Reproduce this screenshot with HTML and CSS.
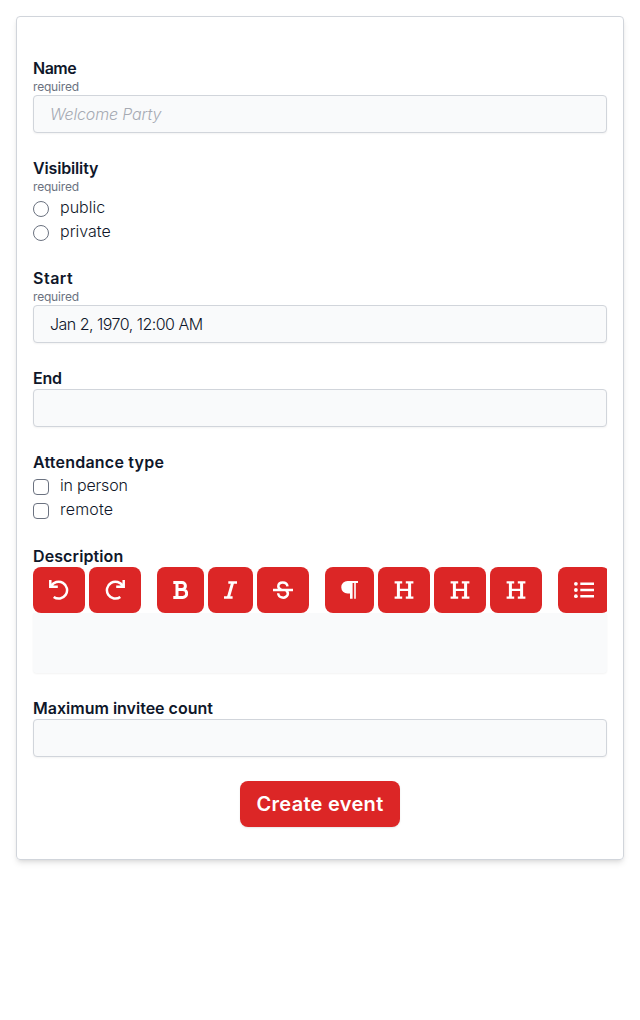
FILE: index.html
```html
<!DOCTYPE html>
<html lang="en">
<head>
<meta charset="utf-8">
<title>Create event</title>
<link rel="stylesheet" href="styles.css">
</head>
<body>
<form class="card">
  <div class="field">
    <label class="label" for="name"><span class="t-name">Name</span></label>
    <span class="required">required</span>
    <input class="input" id="name" placeholder="Welcome Party">
  </div>
  <div class="field">
    <div class="label"><span class="t-visibility">Visibility</span></div>
    <span class="required">required</span>
    <label class="choice"><input class="mark radio" type="radio" name="visibility"><span class="t-public">public</span></label>
    <label class="choice"><input class="mark radio" type="radio" name="visibility"><span class="t-private">private</span></label>
  </div>
  <div class="field">
    <label class="label" for="start"><span class="t-start">Start</span></label>
    <span class="required">required</span>
    <input class="input t-date" id="start" value="Jan 2, 1970, 12:00 AM">
  </div>
  <div class="field">
    <label class="label" for="end"><span class="t-end">End</span></label>
    <input class="input" id="end">
  </div>
  <div class="field">
    <div class="label"><span class="t-attendance">Attendance type</span></div>
    <label class="choice"><input class="mark" type="checkbox"><span class="t-person">in person</span></label>
    <label class="choice"><input class="mark" type="checkbox"><span class="t-remote">remote</span></label>
  </div>
  <div class="field">
    <div class="label"><span class="t-description">Description</span></div>
    <div class="toolbar">
      <div class="group">
        <button type="button" class="tool" aria-label="Undo"><svg width="20" height="20" viewBox="0 0 20 20"><path class="line" d="M1.300 0v6.700h7.500M2.200 6.300A8.400 8.400 0 1 1 4.700 16.900"/></svg></button>
        <button type="button" class="tool" aria-label="Redo"><svg width="20" height="20" viewBox="0 0 20 20"><path class="line" d="M18.700 0v6.700h-7.500M17.800 6.300A8.400 8.400 0 1 0 15.300 16.900"/></svg></button>
      </div>
      <div class="group">
        <button type="button" class="tool" aria-label="Bold"><svg width="15" height="20" viewBox="0 0 15 20"><path class="heavy" d="M.3 2.600H9a3.400 3.400 0 0 1 0 6.800H4.200M9 9.600h.8a3.900 3.900 0 0 1 0 7.800H.3M4 2.600v14.800"/></svg></button>
        <button type="button" class="tool" aria-label="Italic"><svg width="13" height="20" viewBox="0 0 13 20"><path class="line" d="M4.300 2.400H13M0 17.600h8.600"/><path class="heavy" d="M8.700 2.400 4.300 17.600"/></svg></button>
        <button type="button" class="tool" aria-label="Strikethrough"><svg width="20" height="20" viewBox="0 0 20 20"><path class="line" d="M0 10h20M14.500 6.300C13.800 1.200 5.500 1.300 5.300 6.200 5.300 8 6.500 9 8.500 9.800M13.200 10.500C15 12 15.300 13.500 14.500 15.200 12.500 19 5.500 18.300 5.200 13.200"/></svg></button>
      </div>
      <div class="group">
        <button type="button" class="tool" aria-label="Paragraph"><svg width="17" height="20" viewBox="0 0 17 20"><path class="solid" d="M6.500 1H17v1.900h-2.200v15.900h-1.600V2.900h-1.600v15.900H9V13.500H6.500A6.250 6.250 0 0 1 6.500 1z"/></svg></button>
        <button type="button" class="tool" aria-label="Heading 1"><svg width="20" height="20" viewBox="0 0 20 20"><path class="serif" d="M.6 2.400h7.600M11.800 2.400h7.600M.6 17.700h7.600M11.800 17.700h7.600M4.400 9.900h11.200"/><path class="heavy" d="M4.400 2.400v15.300M15.600 2.400v15.300"/></svg></button>
        <button type="button" class="tool" aria-label="Heading 2"><svg width="20" height="20" viewBox="0 0 20 20"><path class="serif" d="M.6 2.400h7.600M11.800 2.400h7.600M.6 17.700h7.600M11.800 17.700h7.600M4.400 9.900h11.200"/><path class="heavy" d="M4.400 2.400v15.300M15.600 2.400v15.300"/></svg></button>
        <button type="button" class="tool" aria-label="Heading 3"><svg width="20" height="20" viewBox="0 0 20 20"><path class="serif" d="M.6 2.400h7.600M11.800 2.400h7.600M.6 17.700h7.600M11.800 17.700h7.600M4.400 9.900h11.200"/><path class="heavy" d="M4.400 2.400v15.300M15.600 2.400v15.300"/></svg></button>
      </div>
      <div class="group">
        <button type="button" class="tool" aria-label="Bullet list"><svg width="20" height="20" viewBox="0 0 20 20"><path class="line" d="M6.300 3.800H20M6.300 10H20M6.300 16.200H20"/><g class="solid"><circle cx="1.900" cy="3.800" r="1.900"/><circle cx="1.900" cy="10" r="1.900"/><circle cx="1.900" cy="16.200" r="1.900"/></g></svg></button>
      </div>
    </div>
    <div class="editor" contenteditable="true"></div>
  </div>
  <div class="field">
    <label class="label" for="max"><span class="t-maximum">Maximum invitee count</span></label>
    <input class="input" id="max">
  </div>
  <button type="button" class="submit">Create event</button>
</form>
</body>
</html>
```
FILE: styles.css
```css
* { box-sizing: border-box; }
body { margin: 0; padding: 16px; background: #fff; color: #0f172a; font: 300 16px/24px Inter, sans-serif; }
.card { display: flex; flex-direction: column; gap: 22px; height: 844px; padding: 38px 16px 32px; border: 1px solid #d1d5db; border-radius: 4px; box-shadow: 0 4px 6px -1px rgba(0,0,0,.1), 0 2px 4px -2px rgba(0,0,0,.1); }
.field { display: flex; flex-direction: column; }
.label { display: block; height: 24px; font-weight: 600; white-space: nowrap; padding-top: 1px; }
.required { height: 16px; font-size: 12px; font-weight: 400; line-height: 16px; letter-spacing: -.18px; color: #6b7280; }
.input { width: 100%; height: 38px; padding: 0 16px; border: 1px solid #d1d5db; border-radius: 4px; background: #f9fafb; box-shadow: 0 1px 2px rgba(0,0,0,.05); color: inherit; font: inherit; outline: none; }
.input::placeholder { color: #a6aab3; font-style: italic; letter-spacing: -.15px; }
.choice { display: flex; align-items: flex-start; gap: 11px; height: 24px; white-space: nowrap; }
.mark { appearance: none; width: 16px; height: 16px; margin: 6px 0 0; border: 1px solid #6b7280; border-radius: 4px; background: #fff; }
.radio { border-radius: 50%; }
.t-name { letter-spacing: -.5px; }
.t-visibility { letter-spacing: -.15px; }
.t-start { letter-spacing: .5px; }
.t-end { letter-spacing: -.2px; }
.t-attendance { letter-spacing: .22px; }
.t-description { letter-spacing: .1px; }
.input.t-date { letter-spacing: -.52px; }
.t-person { letter-spacing: -.2px; }
.t-remote { letter-spacing: .2px; }
.toolbar { display: flex; gap: 16px; height: 46px; overflow: hidden; }
.group { display: flex; flex: none; gap: 4px; }
.tool { display: flex; align-items: center; height: 46px; padding: 0 16px; border: 0; border-radius: 8px; background: #dc2626; }
.line { fill: none; stroke: #fff; stroke-width: 2.5; }
.serif { fill: none; stroke: #fff; stroke-width: 2.2; }
.heavy { fill: none; stroke: #fff; stroke-width: 3; }
.solid { fill: #fff; }
.editor { height: 60px; border-radius: 0 0 4px 4px; background: #f9fafb; box-shadow: 0 1px 2px rgba(0,0,0,.05); }
.submit { align-self: center; width: 160px; height: 46px; margin-top: 2px; padding: 0; border: 0; border-radius: 8px; background: #dc2626; box-shadow: 0 1px 2px rgba(0,0,0,.1); color: #fff; font: 600 20px/28px Inter, sans-serif; letter-spacing: .3px; white-space: nowrap; }
```
